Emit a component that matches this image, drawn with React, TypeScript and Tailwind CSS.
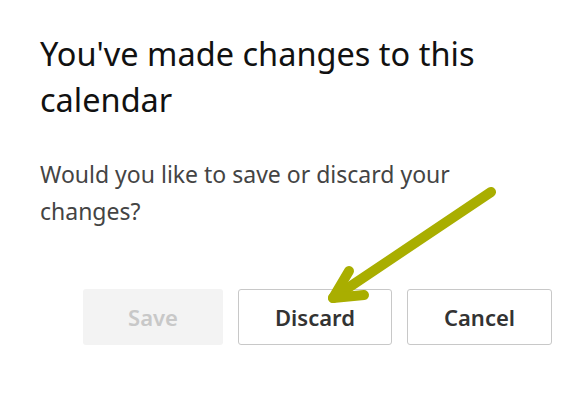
import React from 'react';

const font = { fontFamily: '"Segoe UI", "Noto Sans", sans-serif' };

const Arrow: React.FC = () => (
  <svg className="absolute left-0 top-0 pointer-events-none" width="586" height="402" viewBox="0 0 586 402">
    <g stroke="#a9ae00" strokeWidth="10" strokeLinecap="round" strokeLinejoin="round" fill="none">
      <line x1="491" y1="192" x2="333" y2="298" />
      <polyline points="349,271 333,298 364,295" />
    </g>
  </svg>
);

const App: React.FC = () => {
  return (
    <div className="relative w-[586px] h-[402px] bg-white overflow-hidden" style={font}>
      <div className="pl-10 pr-8 pt-[31px]">
        <h1 className="text-[32.5px] leading-[46px] text-[#111] font-normal">
          You've made changes to this calendar
        </h1>
        <p className="mt-[33px] text-[23px] leading-[37px] text-[#444] w-[440px]">
          Would you like to save or discard your changes?
        </p>
        <div className="mt-[59px] flex gap-[15px] pl-[43px]">
          <button className="w-[140px] h-[56px] rounded-[3px] bg-[#f3f3f3] text-[#c8c8c8] text-[22px] font-semibold">
            Save
          </button>
          <button className="w-[154px] h-[56px] rounded-[3px] border border-[#c8c8c8] bg-white text-[#333] text-[22px] font-semibold">
            Discard
          </button>
          <button className="w-[145px] h-[56px] rounded-[3px] border border-[#c8c8c8] bg-white text-[#333] text-[22px] font-semibold">
            Cancel
          </button>
        </div>
      </div>
      <Arrow />
    </div>
  );
};

export default App;
